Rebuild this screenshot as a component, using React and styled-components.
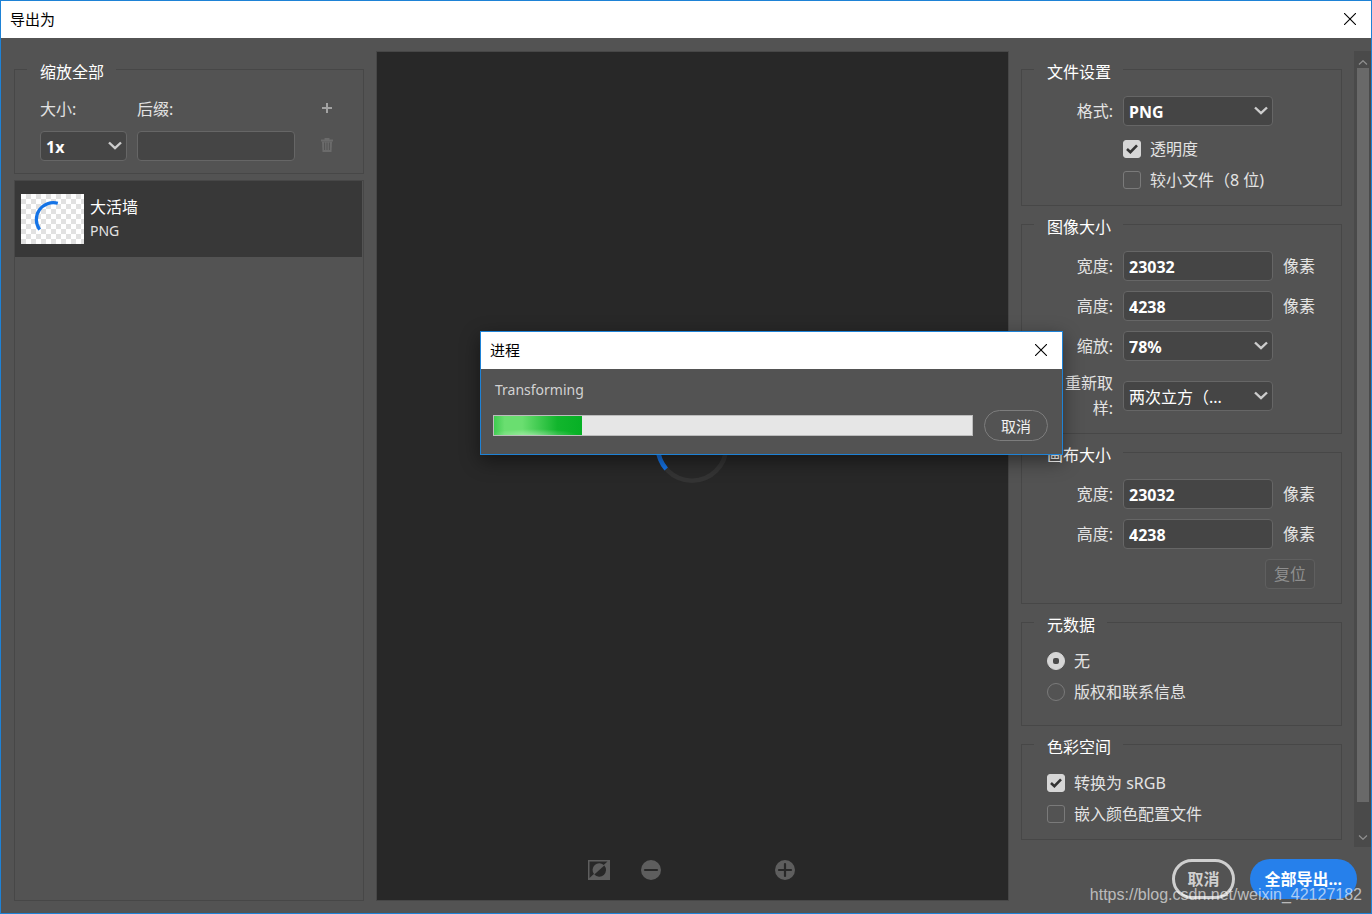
import React, { useState } from "react";
import styled, { createGlobalStyle } from "styled-components";

const GlobalStyle = createGlobalStyle`
    * {
        box-sizing: border-box;
    }

    body {
        margin: 0;
        background: #535353;
        color: #e3e3e3;
        font-family: "Noto Sans", "Noto Sans CJK SC", sans-serif;
        font-size: 16px;
        line-height: 24px;
    }

    button, input, select {
        margin: 0;
        font: inherit;
        color: inherit;
    }
`;

const Window = styled.div`
    position: relative;
    display: flex;
    flex-direction: column;
    min-height: 100vh;
    border: 1px solid #1e82d6;
    background: #535353;
`;

const TitleBar = styled.header`
    display: flex;
    align-items: center;
    justify-content: space-between;
    height: 37px;
    padding: 0 10px 2px 9px;
    background: #ffffff;
    color: #000000;
`;

const Title = styled.h1`
    margin: 0;
    font-size: 15px;
    font-weight: 400;
    line-height: 24px;
`;

const CloseButton = styled.button`
    display: flex;
    padding: 5px;
    border: 0;
    background: none;
`;

const Content = styled.div`
    flex: 1;
    display: grid;
    grid-template-columns: 350px minmax(0, 1fr) 350px;
    gap: 12px;
    padding: 13px 0 0 13px;
`;

const Sidebar = styled.aside`
    display: flex;
    flex-direction: column;
    gap: 6px;
    padding: 3px 0 12px;
`;

// The legend text sits a little lower than the line it interrupts.
const Group = styled.fieldset`
    min-width: 0;
    margin: 0;
    padding: 0 12px;
    border: 1px solid #474747;
`;

const Legend = styled.legend`
    padding: 6px 12px 0 13px;
    color: #ffffff;
`;

const ScaleGrid = styled.div`
    display: grid;
    grid-template-columns: 87px 158px 44px;
    column-gap: 10px;
    row-gap: 10px;
    align-items: center;
    padding: 13px 0 12px 13px;
`;

const IconButton = styled.button`
    display: flex;
    justify-content: center;
    padding: 0 0 3px;
    border: 0;
    background: none;
    color: ${props => (props.disabled ? "#6b6b6b" : "#a3a3a3")};
`;

const TextBox = styled.input`
    width: 100%;
    height: 30px;
    padding: 2px 5px 0;
    border: 1px solid #666666;
    border-radius: 4px;
    background: #454545;
    color: #ffffff;
    font-weight: 700;
`;

const SelectWrap = styled.div`
    display: grid;
    align-items: center;

    > * {
        grid-area: 1 / 1;
    }

    > svg {
        justify-self: end;
        margin-right: 4px;
        pointer-events: none;
    }
`;

const SelectBox = styled.select`
    appearance: none;
    width: 100%;
    height: 30px;
    padding: 2px 24px 0 5px;
    border: 1px solid #666666;
    border-radius: 4px;
    background: #454545;
    color: #ffffff;
    font-weight: ${props => (props.$regular ? 400 : 700)};
`;

const AssetList = styled.ul`
    flex: 1;
    margin: 0;
    padding: 0 1px 0 0;
    border: 1px solid #474747;
    list-style: none;
`;

const Asset = styled.li`
    display: flex;
    align-items: center;
    gap: 6px;
    height: 76px;
    padding: 0 6px;
    background: #383838;
`;

const AssetName = styled.div`
    color: #ffffff;
`;

const AssetType = styled.div`
    font-size: 14px;
`;

const Preview = styled.main`
    display: flex;
    flex-direction: column;
    margin-bottom: 12px;
    padding-right: 2px;
    border: 1px solid #474747;
    background: #282828;
`;

const Canvas = styled.div`
    flex: 1;
    display: flex;
    align-items: center;
    justify-content: center;
`;

const ZoomBar = styled.div`
    display: grid;
    grid-template-columns: 22px 22px 52px 22px;
    gap: 30px;
    align-items: center;
    justify-content: center;
    height: 60px;
`;

const ZoomButton = styled(IconButton)`
    padding: 0;
    color: #5e5e5e;
`;

const Settings = styled.div`
    display: flex;
    flex-direction: column;
`;

const Scroller = styled.div`
    flex: 1;
    display: flex;
    justify-content: space-between;
`;

const Groups = styled.div`
    flex: 1;
    display: flex;
    flex-direction: column;
    gap: 3px;
    padding: 3px 12px 0 0;
`;

const Fields = styled.div`
    display: grid;
    grid-template-columns: 66px 150px auto;
    column-gap: 10px;
    row-gap: 10px;
    align-items: center;
    justify-content: start;
    padding: 12px 0 ${props => props.$bottom || 0}px 13px;
`;

const FieldLabel = styled.label`
    text-align: right;
    line-height: 25px;
`;

const Options = styled.div`
    display: flex;
    flex-direction: column;
    padding: ${props => props.$top}px 0 ${props => props.$bottom}px ${props => (props.$indent ? 89 : 13)}px;
`;

const Option = styled.label`
    display: flex;
    align-items: center;
    gap: 9px;
    height: 31px;
`;

const Mark = styled.span`
    display: grid;
    place-items: center;

    > * {
        grid-area: 1 / 1;
    }

    > svg {
        pointer-events: none;
    }
`;

const Tick = styled.input`
    appearance: none;
    width: 18px;
    height: 18px;
    border: 1px solid #7a7a7a;
    border-radius: ${props => (props.type === "radio" ? "50%" : "3px")};

    &:checked {
        border-color: #d6d6d6;
        background: #d6d6d6;
    }

    & + svg {
        visibility: hidden;
    }

    &:checked + svg {
        visibility: visible;
    }
`;

const ResetButton = styled.button`
    grid-column: 1 / -1;
    justify-self: end;
    height: 30px;
    padding: 0 8px;
    border: 1px solid #5f5f5f;
    border-radius: 4px;
    background: #4f4f4f;
    color: #8e8e8e;
`;

const ScrollTrack = styled.div`
    display: flex;
    flex-direction: column;
    align-items: center;
    width: 17px;
    padding: 9px 0 7px;
    background: #4a4a4a;
    color: #8f8f8f;
`;

const ScrollThumb = styled.div`
    flex: 1;
    width: 12px;
    margin: 3px 0 33px;
    background: #696969;
`;

const Footer = styled.footer`
    display: flex;
    justify-content: flex-end;
    gap: 15px;
    padding: 12px 14px 14px;
`;

const PillButton = styled.button`
    height: 40px;
    padding: 0 ${props => (props.$primary ? 15 : 12)}px;
    border: ${props => (props.$primary ? "0" : "3px solid #cfcfcf")};
    border-radius: 20px;
    background: ${props => (props.$primary ? "#2680eb" : "transparent")};
    color: ${props => (props.$primary ? "#ffffff" : "#cfcfcf")};
    font-weight: 700;
`;

const Watermark = styled.div`
    position: absolute;
    right: 9px;
    bottom: 6px;
    color: rgba(255, 255, 255, 0.62);
    font-family: "Liberation Sans", Arial, sans-serif;
    pointer-events: none;
`;

const Dialog = styled.section`
    position: absolute;
    left: 479px;
    top: 330px;
    width: 583px;
    border: 1px solid #1e82d6;
    background: #535353;
    box-shadow: 0 6px 18px rgba(0, 0, 0, 0.45);
`;

const DialogBody = styled.div`
    padding: 9px 14px 13px 12px;
`;

const Status = styled.p`
    margin: 0 0 8px;
    padding-left: 2px;
    color: #d2d2d2;
    font-size: 14px;
`;

const ProgressRow = styled.div`
    display: flex;
    align-items: center;
    gap: 11px;
`;

const Progress = styled.progress`
    appearance: none;
    flex: 1;
    min-width: 0;
    height: 21px;
    border: 1px solid #bcbcbc;

    &::-webkit-progress-bar {
        background: #e6e6e6;
    }

    &::-webkit-progress-value {
        background:
            radial-gradient(ellipse 50% 6px at 45% 100%, rgba(255, 255, 255, 0.35), transparent),
            linear-gradient(90deg, #3ecb50 0%, #6ade70 12%, #6ade70 32%, #12b52d 72%, #06b025 100%);
    }
`;

const CancelButton = styled.button`
    width: 64px;
    height: 31px;
    padding: 0;
    border: 1px solid #7d7d7d;
    border-radius: 16px;
    background: transparent;
    color: #f0f0f0;
    font-size: 15px;
`;

const CloseIcon = () => (
  <svg width="12" height="12" viewBox="0 0 12 12" fill="none" stroke="currentColor" strokeWidth="1.1">
    <path d="M0 0L12 12M12 0L0 12" />
  </svg>
);

const Chevron = () => (
  <svg width="16" height="10" viewBox="0 0 16 10" fill="none" stroke="#cdcdcd" strokeWidth="2.4">
    <path d="M2 1.5L8 7.2L14 1.5" />
  </svg>
);

const ScrollArrow = ({ down }) => (
  <svg width="10" height="5" viewBox="0 0 10 5" fill="none" stroke="currentColor" strokeWidth="1.2">
    <path d={down ? "M1 0.5L5 4.3L9 0.5" : "M1 4.5L5 0.7L9 4.5"} />
  </svg>
);

const PlusIcon = () => (
  <svg width="10" height="10" viewBox="0 0 10 10" fill="currentColor">
    <path d="M4 0h2v4h4v2H6v4H4V6H0V4h4z" />
  </svg>
);

const TrashIcon = () => (
  <svg width="12" height="14" viewBox="0 0 12 14">
    <path d="M0 1.5H3.5V0H8.5V1.5H12V3.5H0z" fill="currentColor" />
    <path d="M1 3.5H11L10.5 14H1.5z" fill="currentColor" />
    <path d="M3.6 4.5V12M6 4.5V12M8.4 4.5V12" stroke="#535353" strokeWidth="1" />
  </svg>
);

const Thumbnail = () => (
  <svg width="63" height="50" viewBox="0 0 63 50" fill="none">
    <defs>
      <pattern id="checker" width="10" height="10" patternUnits="userSpaceOnUse">
        <rect width="10" height="10" fill="#ffffff" />
        <path d="M5 0h5v5H5zM0 5h5v5H0z" fill="#e1e1e1" />
      </pattern>
    </defs>
    <rect width="63" height="50" fill="url(#checker)" />
    <path d="M36.8 9.2A17 17 0 0 0 18.6 35.6" stroke="#1473e6" strokeWidth="3.2" />
  </svg>
);

const Spinner = () => (
  <svg width="74" height="74" viewBox="0 0 74 74" fill="none" strokeWidth="4.6">
    <circle cx="37" cy="37.5" r="34.2" stroke="#343434" />
    <path d="M47 4.8A34.2 34.2 0 0 0 11.2 60" stroke="#1473e6" />
  </svg>
);

const FitIcon = () => (
  <svg width="22" height="20" viewBox="0 0 22 20">
    <path d="M0 0H22V20H0z" fill="#5e5e5e" />
    <path d="M1.5 1.5H19.5L1.5 18z" fill="#282828" />
    <path d="M6.3 14.5A6.7 6.7 0 0 1 16.3 5.5z" fill="#5e5e5e" />
    <path d="M16.3 5.5A6.7 6.7 0 0 1 6.3 14.5z" fill="#282828" />
  </svg>
);

const ZoomIcon = ({ plus }) => (
  <svg width="20" height="20" viewBox="0 0 20 20">
    <circle cx="10" cy="10" r="10" fill="#5e5e5e" />
    <path d={plus ? "M4 10H16M10 4V16" : "M4 10H16"} stroke="#282828" strokeWidth="2.2" strokeLinecap="round" />
  </svg>
);

const CheckOption = ({ label, checked }) => (
  <Option>
    <Mark>
      <Tick type="checkbox" defaultChecked={checked} />
      <svg width="12" height="10" viewBox="0 0 12 10" fill="none" stroke="#333333" strokeWidth="2.6">
        <path d="M1 5L4.4 8.2L11 1.4" />
      </svg>
    </Mark>
    {label}
  </Option>
);

const RadioOption = ({ label, value, selected, onSelect }) => (
  <Option>
    <Mark>
      <Tick type="radio" name="metadata" checked={selected === value} onChange={() => onSelect(value)} />
      <svg width="6" height="6" viewBox="0 0 6 6">
        <rect width="6" height="6" rx="2" fill="#4a4a4a" />
      </svg>
    </Mark>
    {label}
  </Option>
);

const Dropdown = ({ id, value, regular }) => (
  <SelectWrap>
    <SelectBox id={id} defaultValue={value} $regular={regular}>
      <option>{value}</option>
    </SelectBox>
    <Chevron />
  </SelectWrap>
);

const SizeField = ({ id, label, value }) => (
  <>
    <FieldLabel htmlFor={id}>{label}</FieldLabel>
    <TextBox id={id} defaultValue={value} />
    <span>像素</span>
  </>
);

const SelectField = ({ id, label, value, regular }) => (
  <>
    <FieldLabel htmlFor={id}>{label}</FieldLabel>
    <Dropdown id={id} value={value} regular={regular} />
    <span />
  </>
);

const App = () => {
  const [metadata, setMetadata] = useState("none");

  return (
    <Window>
      <GlobalStyle />
      <TitleBar>
        <Title>导出为</Title>
        <CloseButton aria-label="关闭"><CloseIcon /></CloseButton>
      </TitleBar>

      <Content>
        <Sidebar>
          <Group>
            <Legend>缩放全部</Legend>
            <ScaleGrid>
              <label htmlFor="scale">大小:</label>
              <label htmlFor="suffix">后缀:</label>
              <IconButton aria-label="添加"><PlusIcon /></IconButton>
              <Dropdown id="scale" value="1x" />
              <TextBox id="suffix" />
              <IconButton aria-label="删除" disabled><TrashIcon /></IconButton>
            </ScaleGrid>
          </Group>
          <AssetList>
            <Asset>
              <Thumbnail />
              <div>
                <AssetName>大活墙</AssetName>
                <AssetType>PNG</AssetType>
              </div>
            </Asset>
          </AssetList>
        </Sidebar>

        <Preview>
          <Canvas><Spinner /></Canvas>
          <ZoomBar>
            <ZoomButton aria-label="适合"><FitIcon /></ZoomButton>
            <ZoomButton aria-label="缩小"><ZoomIcon /></ZoomButton>
            <span />
            <ZoomButton aria-label="放大"><ZoomIcon plus /></ZoomButton>
          </ZoomBar>
        </Preview>

        <Settings>
          <Scroller>
            <Groups>
              <Group>
                <Legend>文件设置</Legend>
                <Fields>
                  <SelectField id="format" label="格式:" value="PNG" />
                </Fields>
                <Options $top={7} $bottom={10} $indent>
                  <CheckOption label="透明度" checked />
                  <CheckOption label="较小文件（8 位)" />
                </Options>
              </Group>

              <Group>
                <Legend>图像大小</Legend>
                <Fields $bottom={12}>
                  <SizeField id="image-width" label="宽度:" value="23032" />
                  <SizeField id="image-height" label="高度:" value="4238" />
                  <SelectField id="image-scale" label="缩放:" value="78%" />
                  <SelectField id="resample" label="重新取样:" value="两次立方（..." regular />
                </Fields>
              </Group>

              <Group>
                <Legend>画布大小</Legend>
                <Fields $bottom={14}>
                  <SizeField id="canvas-width" label="宽度:" value="23032" />
                  <SizeField id="canvas-height" label="高度:" value="4238" />
                  <ResetButton disabled>复位</ResetButton>
                </Fields>
              </Group>

              <Group>
                <Legend>元数据</Legend>
                <Options $top={8} $bottom={18}>
                  <RadioOption label="无" value="none" selected={metadata} onSelect={setMetadata} />
                  <RadioOption label="版权和联系信息" value="contact" selected={metadata} onSelect={setMetadata} />
                </Options>
              </Group>

              <Group>
                <Legend>色彩空间</Legend>
                <Options $top={8} $bottom={10}>
                  <CheckOption label="转换为 sRGB" checked />
                  <CheckOption label="嵌入颜色配置文件" />
                </Options>
              </Group>
            </Groups>
            <ScrollTrack>
              <ScrollArrow />
              <ScrollThumb />
              <ScrollArrow down />
            </ScrollTrack>
          </Scroller>
          <Footer>
            <PillButton>取消</PillButton>
            <PillButton $primary>全部导出...</PillButton>
          </Footer>
        </Settings>
      </Content>

      <Dialog role="dialog" aria-label="进程">
        <TitleBar>
          <Title as="h2">进程</Title>
          <CloseButton aria-label="关闭"><CloseIcon /></CloseButton>
        </TitleBar>
        <DialogBody>
          <Status id="status">Transforming</Status>
          <ProgressRow>
            <Progress value={18.4} max={100} aria-labelledby="status" />
            <CancelButton>取消</CancelButton>
          </ProgressRow>
        </DialogBody>
      </Dialog>

      <Watermark>https://blog.csdn.net/weixin_42127182</Watermark>
    </Window>
  );
};

export default App;
